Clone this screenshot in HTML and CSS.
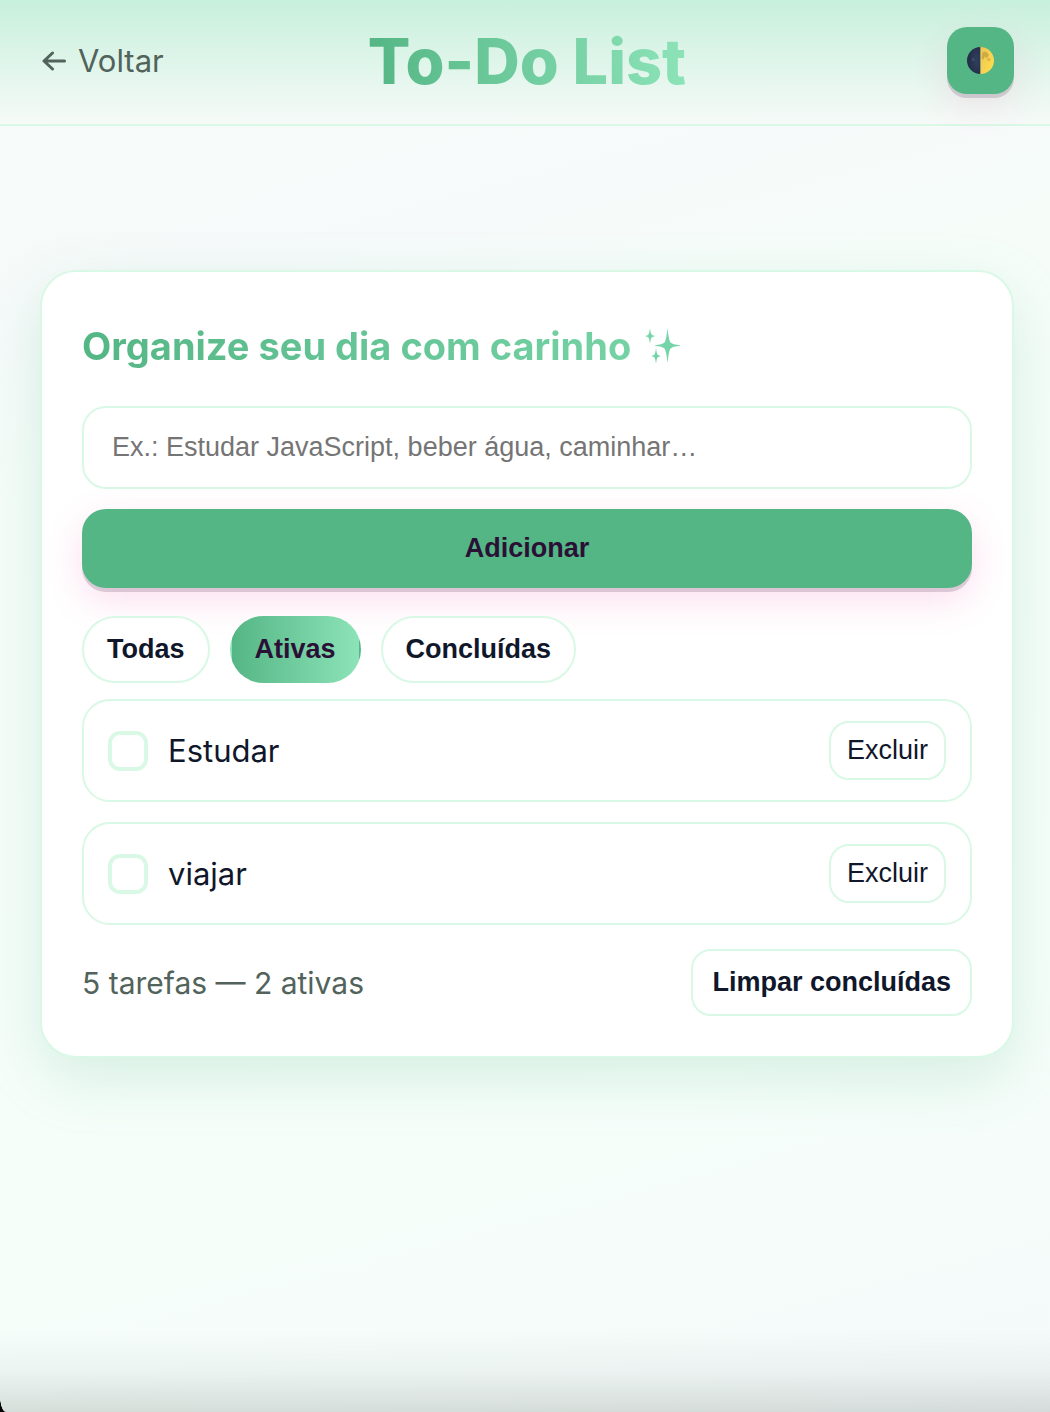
FILE: index.html
```html
<!DOCTYPE html>
<html lang="pt-BR">
<head>
  <meta charset="utf-8">
  <meta name="viewport" content="width=device-width, initial-scale=1">
  <title>To-Do List</title>
  <link rel="stylesheet" href="styles.css">
</head>
<body>
  <header class="topbar">
    <a class="back" href="#">
      <svg class="back-icon" viewBox="0 0 26 20" aria-hidden="true"><path d="M24.500 10H4M12.500 2L4 10L12.500 18"/></svg>
      <span>Voltar</span>
    </a>
    <h1 class="title">To-Do List</h1>
    <button class="theme" type="button" aria-label="Alternar tema">
      <svg class="moon" viewBox="0 0 26 26" aria-hidden="true">
        <defs>
          <linearGradient id="lit" x1="0" y1="0" x2="1" y2="1">
            <stop offset="0" stop-color="#eec453"/>
            <stop offset="1" stop-color="#ffe04f"/>
          </linearGradient>
          <radialGradient id="dark" cx="0.7" cy="0.5" r="0.8">
            <stop offset="0" stop-color="#303f60"/>
            <stop offset="1" stop-color="#1f2740"/>
          </radialGradient>
        </defs>
        <path d="M13 0A13 13 0 0 0 13 26Z" fill="url(#dark)"/>
        <path d="M13 0A13 13 0 0 1 13 26Z" fill="url(#lit)"/>
        <path d="M15 5c3-1 5 0 6 3l-2 3-2-2-1 3-2-1z" fill="#b98f3c" opacity=".6"/>
        <circle cx="21" cy="12" r="1.500" fill="#c99c3e" opacity=".6"/>
        <circle cx="16" cy="20" r="1.500" fill="#f3cf58"/>
        <circle cx="6" cy="12" r="1.500" fill="#3d4a68"/>
      </svg>
    </button>
  </header>

  <main class="page">
    <section class="card">
      <h2 class="heading">
        <span class="heading-text">Organize seu dia com carinho</span>
        <svg class="sparkles" viewBox="0 0 36 36" aria-hidden="true">
          <path d="M22.500 0Q23.800 12.500 25.500 14.500Q27 16.300 36 17.500Q27 18.700 25.500 20.500Q23.800 22.500 22.500 35Q21.200 22.500 19.500 20.500Q18 18.700 9 17.500Q18 16.300 19.500 14.500Q21.200 12.500 22.500 0Z"/>
          <path d="M5 0Q5.700 5.500 6.600 6.500Q7.500 7.500 10.500 8Q7.500 8.500 6.600 9.500Q5.700 10.500 5 16Q4.300 10.500 3.400 9.500Q2.500 8.500 0 8Q2.500 7.500 3.400 6.500Q4.300 5.500 5 0Z"/>
          <path d="M11 20Q11.700 25.500 12.600 26.500Q13.500 27.500 16 28Q13.500 28.500 12.600 29.500Q11.700 30.500 11 36Q10.300 30.500 9.400 29.500Q8.500 28.500 6 28Q8.500 27.500 9.400 26.500Q10.300 25.500 11 20Z"/>
        </svg>
      </h2>

      <form class="entry">
        <input class="field" type="text" aria-label="Nova tarefa" placeholder="Ex.: Estudar JavaScript, beber água, caminhar…">
        <button class="add" type="button">Adicionar</button>
      </form>

      <div class="filters">
        <button class="chip" type="button">Todas</button>
        <button class="chip chip-active" type="button">Ativas</button>
        <button class="chip" type="button">Concluídas</button>
      </div>

      <ul class="tasks">
        <li class="task">
          <input class="check" type="checkbox" id="task-1">
          <label class="task-name" for="task-1">Estudar</label>
          <button class="remove" type="button">Excluir</button>
        </li>
        <li class="task">
          <input class="check" type="checkbox" id="task-2">
          <label class="task-name" for="task-2">viajar</label>
          <button class="remove" type="button">Excluir</button>
        </li>
      </ul>

      <div class="summary">
        <span>5 tarefas — 2 ativas</span>
        <button class="clear" type="button">Limpar concluídas</button>
      </div>
    </section>
  </main>
</body>
</html>
```
FILE: styles.css
```css
:root {
  --green: #55b685;
  --mint: #8ce3b8;
  --line: #d9f8e6;
  --ink: #10172a;
  --plum: #2a1035;
  --muted: #51635a;
}

* {
  box-sizing: border-box;
}

html {
  min-height: 100%;
}

body {
  margin: 0;
  min-height: 100vh;
  color: var(--ink);
  font-family: Inter, sans-serif;
  font-size: 31px;
  line-height: 48px;
  background: linear-gradient(165deg, #f7fbf8 0%, #f6fafa 20%, #f6fdf9 30%, #f6fefa 75%, #f4f9f9 100%);
}

/* shade along the window's lower edge, with the rounded corner */
body::after {
  content: "";
  position: fixed;
  inset: auto 0 0 0;
  height: 80px;
  pointer-events: none;
  background:
    radial-gradient(6px 16px at 100% 0, transparent 96%, #000 104%) 0 100% / 6px 16px no-repeat,
    linear-gradient(rgba(0, 20, 10, 0), rgba(0, 20, 10, 0.04) 50%, rgba(0, 20, 10, 0.13));
}

button,
input {
  font-family: "Liberation Sans", Arial, sans-serif;
  font-size: 27px;
  color: var(--ink);
}

button {
  background: #fff;
  border: 2px solid var(--line);
  cursor: pointer;
}

.topbar {
  display: grid;
  grid-template-columns: 1fr auto 1fr;
  align-items: center;
  height: 126px;
  padding: 0 36px 3px 40px;
  border-bottom: 2px solid var(--line);
  background: linear-gradient(#c8f0dc, #f6faf8);
}

.back {
  display: flex;
  align-items: center;
  gap: 12px;
  color: var(--muted);
  text-decoration: none;
}

.back-icon {
  width: 26px;
  height: 20px;
  fill: none;
  stroke: currentColor;
  stroke-width: 3;
  stroke-linecap: round;
  stroke-linejoin: round;
}

.title {
  margin: 0;
  font-size: 63px;
  line-height: 80px;
  font-weight: 800;
  color: transparent;
  background: linear-gradient(90deg, var(--green), var(--mint));
  -webkit-background-clip: text;
  background-clip: text;
}

.theme {
  display: grid;
  place-items: center;
  justify-self: end;
  width: 67px;
  height: 67px;
  padding: 0;
  border: 0;
  border-radius: 20px;
  background: var(--green);
  box-shadow: 0 4px 0 rgba(42, 16, 53, 0.16), 0 12px 36px rgba(236, 72, 153, 0.12);
}

.moon {
  width: 27px;
  height: 27px;
}

.page {
  padding: 144px 36px 40px 40px;
}

.card {
  padding: 40px;
  border: 2px solid var(--line);
  border-radius: 36px;
  background: #fff;
  box-shadow: 0 20px 60px rgba(85, 182, 133, 0.2);
}

.heading {
  display: flex;
  align-items: center;
  gap: 14px;
  margin: 10px 0 36px;
  font-size: 38px;
  line-height: 48px;
  font-weight: 700;
}

.heading-text {
  color: transparent;
  background: linear-gradient(90deg, var(--green), #74d2a5);
  -webkit-background-clip: text;
  background-clip: text;
}

.sparkles {
  width: 36px;
  height: 36px;
  fill: #76d5a8;
}

.entry {
  display: grid;
  gap: 20px;
}

.field {
  width: 100%;
  height: 83px;
  padding: 0 28px;
  border: 2px solid var(--line);
  border-radius: 24px;
  background: #fff;
}

.field::placeholder {
  color: #757575;
}

.add {
  height: 79px;
  border: 0;
  border-radius: 24px;
  color: var(--plum);
  font-weight: 700;
  background: var(--green);
  box-shadow: 0 4px 0 rgba(42, 16, 53, 0.16), 0 12px 36px rgba(236, 72, 153, 0.18);
}

.filters {
  display: flex;
  gap: 20px;
  margin: 28px 0 16px;
}

.chip {
  height: 67px;
  padding: 0 23px;
  border-radius: 34px;
  font-weight: 700;
}

.chip-active {
  color: var(--plum);
  border-color: transparent;
  background: linear-gradient(90deg, var(--green), var(--mint));
}

.tasks {
  display: grid;
  gap: 20px;
  margin: 0;
  padding: 0;
  list-style: none;
}

.task {
  display: flex;
  align-items: center;
  gap: 20px;
  padding: 20px 24px;
  border: 2px solid var(--line);
  border-radius: 28px;
}

.check {
  appearance: none;
  width: 40px;
  height: 40px;
  margin: 0;
  border: 4px solid var(--line);
  border-radius: 12px;
}

.check:checked {
  background: var(--green);
}

.task-name {
  flex: 1;
}

.remove {
  height: 59px;
  padding: 0 16px;
  border-radius: 20px;
}

.summary {
  display: flex;
  align-items: center;
  justify-content: space-between;
  margin-top: 24px;
  font-size: 30px;
  color: var(--muted);
}

.clear {
  height: 67px;
  padding: 0 19px;
  border-radius: 20px;
  font-weight: 700;
}
```
